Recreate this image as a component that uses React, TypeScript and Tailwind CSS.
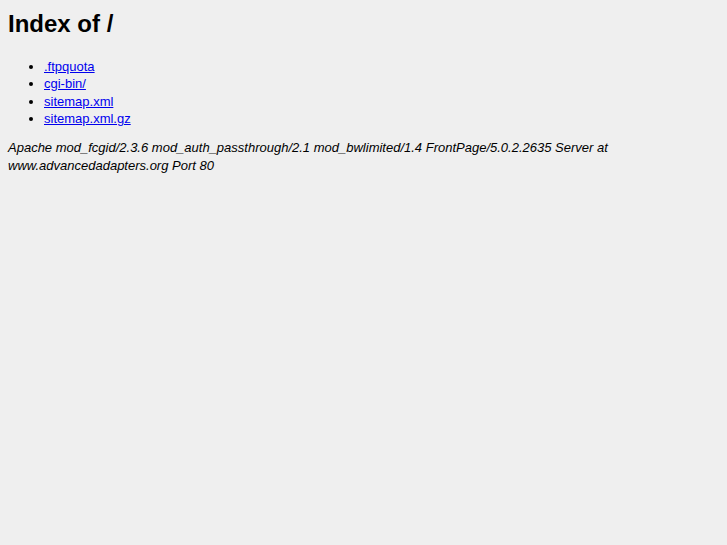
export default function App() {
  const items = [".ftpquota", "cgi-bin/", "sitemap.xml", "sitemap.xml.gz"];
  return (
    <div
      className="min-h-screen w-full bg-[#efefef] text-black px-[8px] pt-[10px]"
      style={{ fontFamily: '"Liberation Sans", Arial, sans-serif' }}
    >
      <h1 className="text-[24px] font-bold leading-[28px] m-0">Index of /</h1>
      <ul className="list-disc pl-[36px] mt-[20px] mb-0 text-[13px] leading-[17.3px]">
        {items.map((it) => (
          <li key={it}>
            <a href="#" className="text-[#0000ee] underline">
              {it}
            </a>
          </li>
        ))}
      </ul>
      <address className="italic text-[13px] leading-[18px] mt-[12px] max-w-[610px]">
        Apache mod_fcgid/2.3.6 mod_auth_passthrough/2.1 mod_bwlimited/1.4 FrontPage/5.0.2.2635 Server at
        www.advancedadapters.org Port 80
      </address>
    </div>
  );
}
